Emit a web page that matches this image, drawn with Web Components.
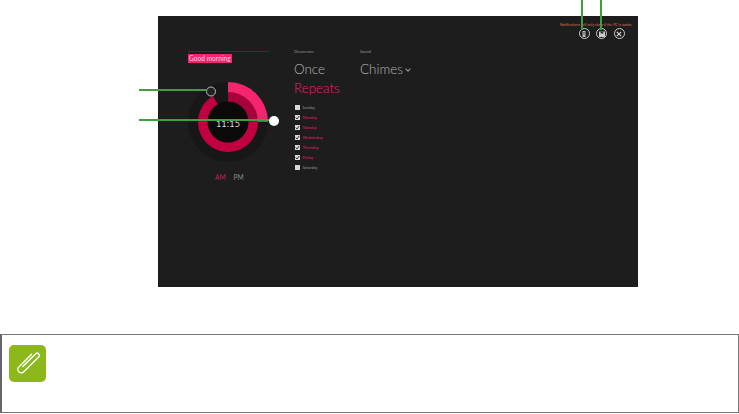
<!DOCTYPE html>
<html>
<head>
<style>
html, body { margin: 0; background: #fff; }
body { font-family: "Lato", "Liberation Sans", sans-serif; }
</style>
<script>
const shell = (el, html) => {
  el.attachShadow({mode: 'open'}).innerHTML = html;
};

class AlarmDial extends HTMLElement {
  constructor() {
    super();
    shell(this, `
<style>
:host { display: block; position: relative; width: 92px; height: 92px; }
svg { display: block; }
.time { position: absolute; left: 0; right: 0; top: 40px; text-align: center; font-size: 9px; line-height: 16px; letter-spacing: .2px; color: #ddd; }
</style>
<svg width="92" height="92" viewBox="-46 -46 92 92">
  <circle r="40" fill="#171717"/>
  <path d="M0 -40 A40 40 0 0 1 40 0 L0 0 Z" fill="#f5246f"/>
  <path d="M0 -30 A30 30 0 0 1 30 0 L0 0 Z" fill="#a8003c"/>
  <path d="M30 0 A30 30 0 1 1 -15 -26 L0 0 Z" fill="#c0003f"/>
  <circle r="20.5" fill="#0a0a0a"/>
  <circle cx="-17" cy="-30.5" r="4.5" fill="#222" stroke="#bbb" stroke-width="1"/>
</svg>
<div class="time">11:15</div>
`);
  }
}
customElements.define('alarm-dial', AlarmDial);

class DayList extends HTMLElement {
  constructor() {
    super();
    const days = [['Sunday', 0], ['Monday', 1], ['Tuesday', 1], ['Wednesday', 1], ['Thursday', 1], ['Friday', 1], ['Saturday', 0]];
    const rows = days.map(([d, on]) => `
<div class="row ${on ? 'on' : ''}">
  <span class="box">${on ? '<svg width="5" height="5" viewBox="0 0 5 5"><path d="M.8 2.6 2 4 4.2 1" fill="none" stroke="#222" stroke-width=".9"/></svg>' : ''}</span>${d}
</div>`).join('');
    shell(this, `
<style>
:host { display: flex; flex-direction: column; gap: 4.1px; }
.row { display: flex; align-items: center; gap: 2.5px; height: 6px; font-size: 3.9px; color: #999; }
.row.on { color: #c8195c; font-weight: 700; }
.box { width: 5px; height: 5px; margin-left: 1px; background: #d8d8d8; display: block; }
svg { display: block; }
</style>${rows}`);
  }
}
customElements.define('day-list', DayList);

class CircleButtons extends HTMLElement {
  constructor() {
    super();
    shell(this, `
<style>
:host { display: flex; gap: 6.5px; }
span { box-sizing: border-box; width: 11px; height: 11px; border: 1px solid #ccc; border-radius: 50%; display: flex; align-items: center; justify-content: center; }
</style>
<span><svg width="6" height="6" viewBox="0 0 6 6"><path d="M1.5 0h3v6h-3z" fill="#bbb"/><path d="M2 1.5h2M2 3h2" stroke="#444" stroke-width=".6"/></svg></span>
<span><svg width="6" height="6" viewBox="0 0 6 6"><path d="M0 .5h6v5.5H0z" fill="#ccc"/><path d="M1.6 .5h2.8v2H1.6z" fill="#333"/></svg></span>
<span><svg width="6" height="6" viewBox="0 0 6 6"><path d="M.8 .8 5.2 5.2M5.2 .8 .8 5.2" stroke="#ddd" stroke-width="1.1"/></svg></span>
`);
  }
}
customElements.define('circle-buttons', CircleButtons);

class AlarmShot extends HTMLElement {
  constructor() {
    super();
    shell(this, `
<style>
:host { display: block; width: 480px; height: 271px; background: #1d1d1d; color: #aaa; box-sizing: border-box; position: relative; }
.top { display: flex; flex-direction: column; align-items: flex-end; padding: 6px 6px 0 0; height: 30px; box-sizing: border-box; }
.note { font-size: 3.6px; line-height: 6px; color: #d0744c; }
circle-buttons { margin: 0 7.5px 0 0; }
.cols { display: flex; padding-left: 30px; }
.clock { width: 106px; display: flex; flex-direction: column; align-items: flex-start; }
.rule { width: 81px; height: 1px; background: #6a1238; margin-top: 5px; }
.greet { font-size: 6.6px; line-height: 9px; margin-top: 2px; background: #f5246f; color: #ffd6e6; padding: 0 1px; }
alarm-dial { margin: 12.5px 0 0 -6px; }
.ampm { display: flex; gap: 8px; font-size: 6.6px; line-height: 9px; margin: 5.5px 0 0 27px; color: #8a8a8a; }
.ampm b { font-weight: 400; color: #c8195c; }
.occ { width: 66px; }
.label { font-size: 3.9px; line-height: 6px; color: #999; margin-top: 3px; }
.big { font-size: 13.4px; line-height: 19px; font-weight: 300; color: #b4b4b4; }
.big.pink { color: #e8246e; }
.label + .big { margin-top: 4.5px; }
day-list { margin-top: 6.5px; }
.chev { display: inline-block; width: 3px; height: 3px; border: solid #999; border-width: 0 1px 1px 0; transform: rotate(45deg); margin: 0 0 3px 3px; }
</style>
<div class="top">
  <div class="note">Notifications will only show if the PC is awake</div>
  <circle-buttons></circle-buttons>
</div>
<div class="cols">
  <div class="clock">
    <div class="rule"></div>
    <div class="greet">Good morning</div>
    <alarm-dial></alarm-dial>
    <div class="ampm"><b>AM</b><span>PM</span></div>
  </div>
  <div class="occ">
    <div class="label">Occurrence</div>
    <div class="big">Once</div>
    <div class="big pink">Repeats</div>
    <day-list></day-list>
  </div>
  <div class="snd">
    <div class="label">Sound</div>
    <div class="big">Chimes<i class="chev"></i></div>
  </div>
</div>
`);
  }
}
customElements.define('alarm-shot', AlarmShot);

class NoteBox extends HTMLElement {
  constructor() {
    super();
    shell(this, `
<style>
:host { display: block; height: 79px; box-sizing: border-box; border: 1px solid #777; border-left: 2px solid #666; padding: 10px 7px; }
svg { display: block; }
</style>
<svg width="37" height="37" viewBox="0 0 37 37">
  <rect width="37" height="37" rx="5" fill="#8cb81c"/>
  <g transform="rotate(45 18.5 18.5)" fill="none" stroke="#fff" stroke-width="1.4" stroke-linecap="round">
    <path d="M14.8 9 V27 a3.5 3.5 0 0 0 7 0 V6 a2.2 2.2 0 0 0 -4.4 0 V24"/>
  </g>
</svg>
`);
  }
}
customElements.define('note-box', NoteBox);

class ManualPage extends HTMLElement {
  constructor() {
    super();
    shell(this, `
<style>
:host { display: block; position: relative; width: 739px; height: 414px; box-sizing: border-box; padding-top: 16px; overflow: hidden; }
alarm-shot { margin-left: 158px; }
note-box { margin-top: 47px; }
.lead { position: absolute; background: #3f9e3f; }
.knob { position: absolute; left: 269px; top: 116px; width: 10px; height: 10px; border-radius: 50%; background: #fff; }
</style>
<alarm-shot></alarm-shot>
<note-box></note-box>
<div class="lead" style="left:139px;top:89px;width:68px;height:2px"></div>
<div class="lead" style="left:139px;top:119px;width:131px;height:2px"></div>
<div class="lead" style="left:581px;top:0;width:2px;height:30px"></div>
<div class="lead" style="left:600px;top:0;width:2px;height:30px"></div>
<div class="knob"></div>
`);
  }
}
customElements.define('manual-page', ManualPage);
</script>
</head>
<body>
<manual-page></manual-page>
</body>
</html>
